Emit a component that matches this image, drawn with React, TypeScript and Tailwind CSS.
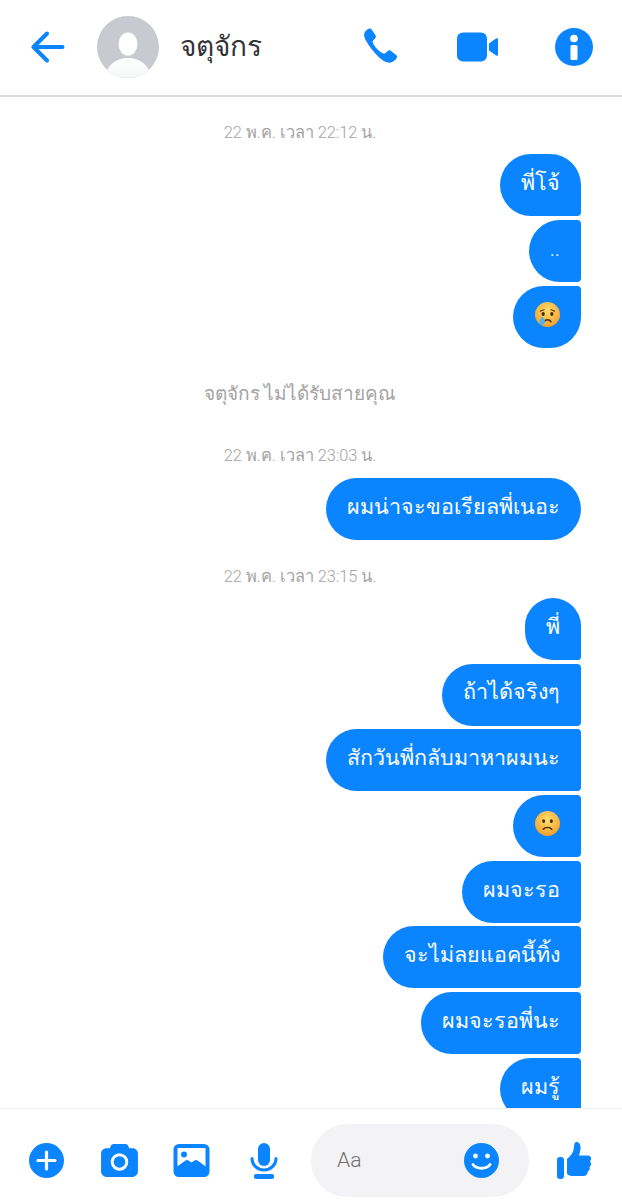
const BLUE = "#0a84ff";

function Time({ children, className }: { children: string; className: string }) {
  return <div className={`pr-[22px] text-center text-[16.400px] font-light leading-5 text-[#a3a3a3] ${className}`}>{children}</div>;
}

// pos decides which right corners stay round, like messenger's grouped bubbles
function Bubble({ children, pos }: { children: React.ReactNode; pos: "first" | "mid" | "last" | "only" }) {
  const corners = {
    first: "rounded-l-[31px] rounded-tr-[31px] rounded-br-[4px]",
    mid: "rounded-l-[31px] rounded-r-[4px]",
    last: "rounded-l-[31px] rounded-tr-[4px] rounded-br-[31px]",
    only: "rounded-[31px]",
  }[pos];
  return (
    <div className={`flex h-[62px] shrink-0 items-center bg-[#0a84ff] px-[21px] pb-[5px] text-[21.500px] font-light leading-none text-white ${corners}`}>
      {children}
    </div>
  );
}

function CryFace() {
  return (
    <svg className="mx-[0.500px]" width="25" height="25" viewBox="0 0 26 26">
      <defs>
        <radialGradient id="cry" cx="50%" cy="35%" r="70%">
          <stop offset="0%" stopColor="#ffdf6e" />
          <stop offset="100%" stopColor="#f59a23" />
        </radialGradient>
      </defs>
      <circle cx="13" cy="13" r="13" fill="url(#cry)" />
      <path d="M5.500 9.500 9.500 8M20.500 9.500 16.500 8" stroke="#6b3f12" strokeWidth="1.200" strokeLinecap="round" />
      <ellipse cx="8.500" cy="12.500" rx="1.700" ry="2" fill="#4a2c10" />
      <ellipse cx="17.500" cy="12.500" rx="1.700" ry="2" fill="#4a2c10" />
      <path d="M9.500 20.500c1.500-2.800 5.500-2.800 7 0" stroke="#4a2c10" strokeWidth="1.600" fill="none" strokeLinecap="round" />
      <path d="M7.500 15c-1.800 2.600-3 4-3 5.600a3 3 0 0 0 6 0c0-1.600-1.200-3-3-5.600z" fill="#4fb4ee" />
    </svg>
  );
}

function SadFace() {
  return (
    <svg className="mx-[0.500px]" width="25" height="25" viewBox="0 0 26 26">
      <defs>
        <radialGradient id="sad" cx="50%" cy="35%" r="70%">
          <stop offset="0%" stopColor="#ffdf6e" />
          <stop offset="100%" stopColor="#f59a23" />
        </radialGradient>
      </defs>
      <circle cx="13" cy="13" r="13" fill="url(#sad)" />
      <ellipse cx="9" cy="10.500" rx="1.600" ry="2" fill="#4a2c10" />
      <ellipse cx="17" cy="10.500" rx="1.600" ry="2" fill="#4a2c10" />
      <path d="M8.500 19c2-2.600 7-2.600 9 0" stroke="#4a2c10" strokeWidth="1.500" fill="none" strokeLinecap="round" />
    </svg>
  );
}

function Header() {
  return (
    <header className="flex h-[97px] shrink-0 items-center border-b-2 border-[#dedfe1] bg-white pb-[1px]">
      <svg className="ml-[31px]" width="34" height="32" viewBox="0 0 34 32" fill="none">
        <path d="M2.500 16h29M16 2.500 2.500 16 16 29.500" stroke={BLUE} strokeWidth="4" strokeLinecap="round" strokeLinejoin="round" />
      </svg>
      <svg className="ml-[32px]" width="62" height="62" viewBox="0 0 62 62">
        <defs>
          <clipPath id="avatar">
            <circle cx="31" cy="31" r="31" />
          </clipPath>
          <linearGradient id="body" x1="0" y1="0" x2="0" y2="1">
            <stop offset="0%" stopColor="#ffffff" />
            <stop offset="100%" stopColor="#eceef1" />
          </linearGradient>
        </defs>
        <g clipPath="url(#avatar)">
          <rect width="62" height="62" fill="#c8cad0" />
          <ellipse cx="31" cy="28" rx="9.500" ry="11.500" fill="#fff" />
          <ellipse cx="31" cy="60" rx="22" ry="18" fill="url(#body)" />
        </g>
      </svg>
      <div className="ml-[21px] text-[28px] font-light leading-none text-[#333]">จตุจักร</div>
      <svg className="ml-auto" width="38" height="38" viewBox="0 0 38 38">
        <path
          d="M7.500.8c1-.7 2.300-.5 3 .5l4 6c.7 1 .5 2.200-.3 3l-2 2.200c-.6.6-.7 1.400-.3 2.200 1 2.300 2.500 4.500 4.200 6.300 1.700 1.800 3.800 3.300 6.100 4.400.8.400 1.700.200 2.300-.4l2.200-2c.8-.8 2-.9 3-.2l5.500 4.200c1 .8 1.200 2.100.5 3.100-1.500 2.300-3.700 4.300-6.500 4.700-3.500.4-8-2.200-12.500-6.700C12.500 23.700 7.500 17.500 4.700 12.300 3 9 2.700 6.500 3.500 4.700 4.300 3 5.800 1.800 7.500.8z"
          fill={BLUE}
        />
      </svg>
      <svg className="ml-[58px]" width="42" height="30" viewBox="0 0 42 30">
        <rect width="30" height="29" y=".5" rx="6" fill={BLUE} />
        <path d="M32 11.500 39 6.500c1-.7 2-.1 2 1v15c0 1.100-1 1.700-2 1l-7-5z" fill={BLUE} />
      </svg>
      <svg className="ml-[56px] mr-[29px]" width="38" height="38" viewBox="0 0 38 38">
        <circle cx="19" cy="19" r="19" fill={BLUE} />
        <circle cx="19" cy="10.500" r="3.800" fill="#fff" />
        <rect x="15.500" y="17" width="7" height="15" rx="1.500" fill="#fff" />
      </svg>
    </header>
  );
}

function Composer() {
  return (
    <footer className="flex h-[92px] shrink-0 items-center border-t border-[#f1f1f3] bg-white pt-[12px]">
      <svg className="ml-[29px] shrink-0" width="35" height="35" viewBox="0 0 35 35">
        <circle cx="17.500" cy="17.500" r="17.500" fill={BLUE} />
        <path d="M17.500 9v17M9 17.500h17" stroke="#fff" strokeWidth="3.200" strokeLinecap="round" />
      </svg>
      <svg className="ml-[37px] shrink-0" width="37" height="33" viewBox="0 0 38 34">
        <path
          d="M13 0h12c1.500 0 2.500.8 3 2l1 2.500h3.500c3 0 5.500 2.500 5.500 5.500v18c0 3.300-2.700 6-6 6H6c-3.300 0-6-2.700-6-6V10c0-3 2.500-5.500 5.500-5.500H9L10 2c.5-1.200 1.500-2 3-2z"
          fill={BLUE}
        />
        <circle cx="19" cy="18.500" r="7.500" fill="none" stroke="#fff" strokeWidth="3" />
      </svg>
      <svg className="ml-[35px] shrink-0" width="37" height="33" viewBox="0 0 36 33">
        <rect x="1.500" y="1.500" width="33" height="30" rx="4" fill={BLUE} stroke={BLUE} strokeWidth="3" />
        <rect x="4" y="4" width="28" height="20" fill="#fff" />
        <circle cx="10.500" cy="10.500" r="3" fill={BLUE} />
        <path d="M3 23 12 16.500c1-.7 2-.7 3 0l3 2 3-2c1-.7 2-.7 3 0L33 23v8H3z" fill={BLUE} />
      </svg>
      <svg className="ml-[40px] shrink-0" width="28" height="36" viewBox="0 0 28 36" fill="none">
        <rect x="8" y="0" width="12" height="23" rx="6" fill={BLUE} />
        <path d="M2 15.500c0 6.500 5.400 11.500 12 11.500s12-5 12-11.500" stroke={BLUE} strokeWidth="3" strokeLinecap="round" />
        <rect x="4" y="31" width="20" height="5" rx="2" fill={BLUE} />
      </svg>
      <div className="ml-[33px] flex h-[73px] w-[218px] shrink-0 items-center justify-between rounded-[36px] bg-[#f3f3f5] pl-[26px] pr-[30px]">
        <span className="text-[21px] font-light text-[#6f6f6f]">Aa</span>
        <svg width="35" height="35" viewBox="0 0 35 35">
          <circle cx="17.500" cy="17.500" r="17.500" fill={BLUE} />
          <circle cx="11.500" cy="13" r="2.400" fill="#fff" />
          <circle cx="23.500" cy="13" r="2.400" fill="#fff" />
          <path d="M9 21.500c3.500 5 13.500 5 17 0" stroke="#fff" strokeWidth="2.800" fill="none" strokeLinecap="round" />
        </svg>
      </div>
      <svg className="ml-[28px] shrink-0" width="36" height="37" viewBox="0 0 36 37">
        <rect x="0" y="15" width="7" height="22" rx="3" fill={BLUE} />
        <path
          d="M10 17c3-2.500 5.500-5.500 6.500-9 .5-2 .3-4 1-6.500.5-1.500 3-2 4.500-.5 2 2 1.800 6 1 9-.3 1.200-.8 2.500-1 3.500h8.500c3 0 4 2 3.500 4-.2.800-.7 1.500-1 2 1.200 1 1.400 3 .5 4.500-.3.500-.6.800-1 1 .5 1.300.3 3-1 4-.3.200-.5.500-.8.500.3 1.800-.8 4-3.200 4.500H16c-3 0-6-1-6-3z"
          fill={BLUE}
        />
      </svg>
    </footer>
  );
}

export default function App() {
  return (
    <div className="flex h-[1200px] w-[622px] flex-col overflow-hidden bg-white font-['Roboto','Noto_Sans','Liberation_Sans',sans-serif]">
      <Header />
      <main className="flex min-h-0 flex-1 flex-col overflow-hidden">
        <Time className="mt-[26px]">22 พ.ค. เวลา 22:12 น.</Time>
        <div className="mr-[41px] mt-[11px] flex flex-col items-end gap-1">
          <Bubble pos="first">พี่โจ้</Bubble>
          <Bubble pos="mid">..</Bubble>
          <Bubble pos="last"><CryFace /></Bubble>
        </div>
        <div className="mt-[34px] pr-[22px] text-center text-[19px] font-light leading-6 text-[#a3a3a3]">จตุจักร ไม่ได้รับสายคุณ</div>
        <Time className="mt-[40px]">22 พ.ค. เวลา 23:03 น.</Time>
        <div className="mr-[41px] mt-[12px] flex flex-col items-end">
          <Bubble pos="only">ผมน่าจะขอเรียลพี่เนอะ</Bubble>
        </div>
        <Time className="mt-[27px]">22 พ.ค. เวลา 23:15 น.</Time>
        <div className="mr-[41px] mt-[11px] flex flex-col items-end gap-[3.700px]">
          <Bubble pos="first">พี่</Bubble>
          <Bubble pos="mid">ถ้าได้จริงๆ</Bubble>
          <Bubble pos="mid">สักวันพี่กลับมาหาผมนะ</Bubble>
          <Bubble pos="mid"><SadFace /></Bubble>
          <Bubble pos="mid">ผมจะรอ</Bubble>
          <Bubble pos="mid">จะไม่ลยแอคนี้ทิ้ง</Bubble>
          <Bubble pos="mid">ผมจะรอพี่นะ</Bubble>
          <Bubble pos="mid">ผมรู้</Bubble>
        </div>
      </main>
      <Composer />
    </div>
  );
}
